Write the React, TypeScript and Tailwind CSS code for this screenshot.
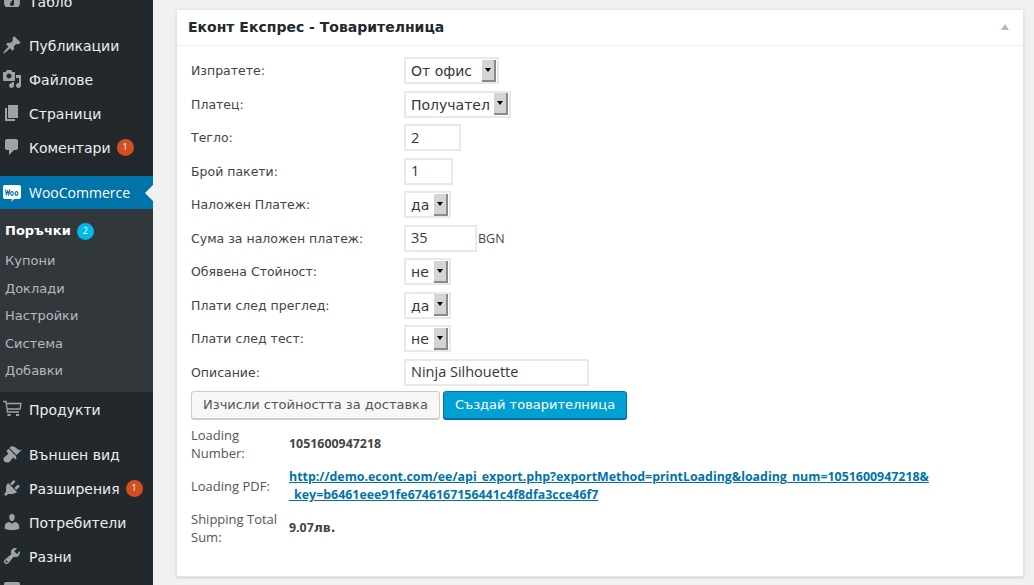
const cyr = "font-['DejaVu_Sans',sans-serif]";
const open = "font-['Open_Sans',sans-serif]";

const icons: Record<string, string> = {
  dashboard:
    "M3.76 16h12.48c1.1-1.37 1.76-3.11 1.76-5 0-4.42-3.58-8-8-8s-8 3.58-8 8c0 1.89.66 3.63 1.76 5zM10 4c.55 0 1 .45 1 1s-.45 1-1 1-1-.45-1-1 .45-1 1-1zM6 6c.55 0 1 .45 1 1s-.45 1-1 1-1-.45-1-1 .45-1 1-1zm8 0c.55 0 1 .45 1 1s-.45 1-1 1-1-.45-1-1 .45-1 1-1zm-5.37 5.55L12 7v6c0 1.1-.9 2-2 2s-2-.9-2-2c0-.57.24-1.08.63-1.45z",
  post: "M10.44 3.02l1.82-1.82 6.36 6.35-1.83 1.82c-1.05-.68-2.48-.57-3.41.36l-.75.75c-.92.93-1.04 2.35-.35 3.41l-1.83 1.82-2.41-2.41-2.8 2.79c-.42.42-3.38 2.71-3.8 2.29s1.86-3.39 2.28-3.81l2.79-2.79L4.1 9.36l1.83-1.82c1.05.69 2.48.57 3.4-.36l.75-.75c.93-.92 1.05-2.35.36-3.41z",
  media:
    "M13 11V4c0-.55-.45-1-1-1h-1.67L9 1H5L3.67 3H2c-.55 0-1 .45-1 1v7c0 .55.45 1 1 1h10c.55 0 1-.45 1-1zM7 4.5c1.38 0 2.5 1.12 2.5 2.5S8.38 9.5 7 9.5 4.5 8.38 4.5 7 5.62 4.5 7 4.5zM14 6h5v10.5c0 1.38-1.12 2.5-2.5 2.5S14 17.88 14 16.5s1.12-2.5 2.5-2.5c.17 0 .34.02.5.05V9h-3V6zm-4 8.05V13h2v3.5c0 1.38-1.12 2.5-2.5 2.5S7 17.88 7 16.5 8.12 14 9.5 14c.17 0 .34.02.5.05z",
  page: "M6 15V2h10v13H6zm-1 1h8v2H3V5h2v11z",
  comments: "M5 2h9c1.1 0 2 .9 2 2v7c0 1.1-.9 2-2 2h-2l-5 5v-5H5c-1.1 0-2-.9-2-2V4c0-1.1.9-2 2-2z",
  appearance:
    "M14.48 11.06L7.41 3.99l1.5-1.5c.5-.56 2.3-.47 3.51.32 1.21.8 1.43 1.28 2.91 2.1 1.18.64 2.45 1.26 4.45.85zm-.71.71L6.7 4.7 4.93 6.47c-.39.39-.39 1.02 0 1.41l1.06 1.06c.39.39.39 1.03 0 1.42-.6.6-1.43 1.11-2.21 1.69-.35.26-.7.53-1.01.84C1.43 13.23.91 15 2.3 17.7c2.7 1.39 4.47.87 5.81-.47.31-.31.58-.66.84-1.01.58-.78 1.09-1.61 1.69-2.21.39-.39 1.03-.39 1.42 0l1.06 1.06c.39.39 1.02.39 1.41 0z",
  plugins:
    "M13.11 4.36L9.87 7.6 8 5.73l3.24-3.24c.35-.34 1.05-.2 1.56.32.52.51.66 1.21.31 1.55zm-8 1.77l.91-1.12 9.01 9.01-1.19.84c-.71.71-2.63 1.16-3.82 1.16H6.14L4.9 17.26c-.59.59-1.54.59-2.12 0-.59-.58-.59-1.53 0-2.12l1.24-1.24v-3.88c0-1.13.4-3.19 1.09-3.89zm7.26 3.97l3.24-3.24c.34-.35 1.04-.21 1.55.31.52.51.66 1.21.31 1.55l-3.24 3.25z",
  users:
    "M10 9.25c-2.27 0-2.73-3.44-2.73-3.44C7 4.02 7.82 2 9.97 2c2.16 0 2.98 2.02 2.71 3.81 0 0-.41 3.44-2.68 3.44zm0 2.57L12.72 10c2.39 0 4.52 2.33 4.52 4.53v2.49s-3.65 1.13-7.24 1.13c-3.65 0-7.24-1.13-7.24-1.13v-2.49c0-2.25 1.94-4.48 4.47-4.48z",
  tools:
    "M16.68 9.77c-1.34 1.34-3.3 1.67-4.95.99l-5.41 6.52c-.99.99-2.59.99-3.58 0s-.99-2.59 0-3.57l6.52-5.42c-.68-1.65-.35-3.61.99-4.95 1.28-1.28 3.12-1.62 4.72-1.06l-2.89 2.89 2.82 2.82 2.86-2.87c.53 1.58.18 3.39-1.08 4.65zM3.81 16.21c.4.39 1.04.39 1.43 0 .4-.4.4-1.04 0-1.43-.39-.4-1.03-.4-1.43 0-.39.39-.39 1.03 0 1.43z",
  settings: "M18 16V4c0-1.1-.9-2-2-2H4c-1.1 0-2 .9-2 2v12c0 1.1.9 2 2 2h12c1.1 0 2-.9 2-2z",
};

function DashIcon({ name }: { name: string }) {
  return (
    <svg viewBox="0 0 20 20" className="h-5 w-5 shrink-0 fill-[#9ea3a8]">
      <path d={icons[name]} />
    </svg>
  );
}

function CartIcon() {
  return (
    <svg viewBox="0 0 20 20" className="h-5 w-5 shrink-0 fill-none stroke-[#9ea3a8]">
      <path d="M1 2.500h3l1.500 10.500h11.500M4.500 4.500h14.500l-1 5.500H5.500" strokeWidth="1.300" />
      <path d="M5.500 15h3v2h-3zM14 15h3v2h-3z" fill="#9ea3a8" stroke="none" />
    </svg>
  );
}

function WooIcon() {
  return (
    <svg viewBox="0 0 20 20" className="h-5 w-5 shrink-0">
      <path d="M3 2h14c1.300 0 2 .8 2 2v10c0 1.200-.7 2-2 2h-5l-2.500 3 .5-3H3c-1.300 0-2-.8-2-2V4c0-1.200.7-2 2-2z" fill="#fff" />
      <path d="M3.500 6.500l.8 5 1.400-3.500 1 3.500 1.200-5M10 8.500a1.300 2 0 1 0 .01 0M14.500 8.500a1.300 2 0 1 0 .01 0" fill="none" stroke="#0073aa" strokeWidth="1.100" />
    </svg>
  );
}

function MenuItem({ icon, label, badge }: { icon: React.ReactNode; label: string; badge?: string }) {
  return (
    <div className="flex h-[34px] items-center pl-[2px] text-[#eeeeee]">
      {icon}
      <span className={`ml-[7px] pt-[2px] text-[14px] ${cyr}`}>{label}</span>
      {badge && (
        <span className={`ml-[6px] flex h-[17px] w-[17px] items-center justify-center rounded-full bg-[#d54e21] text-[9px] text-white ${open}`}>
          {badge}
        </span>
      )}
    </div>
  );
}

function Sidebar() {
  return (
    <aside className="w-[153px] shrink-0 bg-[#23282d]">
      <div className="-mt-[16px]">
        <MenuItem icon={<DashIcon name="dashboard" />} label="Табло" />
      </div>
      <div className="mt-[10px]">
        <MenuItem icon={<DashIcon name="post" />} label="Публикации" />
        <MenuItem icon={<DashIcon name="media" />} label="Файлове" />
        <MenuItem icon={<DashIcon name="page" />} label="Страници" />
        <MenuItem icon={<DashIcon name="comments" />} label="Коментари" badge="1" />
      </div>
      <div className="relative mt-[12px] h-[33px] bg-[#0073aa] pl-[2px] text-white">
        <div className="flex h-full items-center">
          <WooIcon />
          <span className={`ml-[7px] text-[14px] ${open}`}>WooCommerce</span>
        </div>
        <span className="absolute right-0 top-[9px] h-0 w-0 border-y-[8px] border-r-[8px] border-y-transparent border-r-[#f1f1f1]" />
      </div>
      <div className={`h-[183px] bg-[#32373c] pt-[8px] text-[13px] text-[#b4b9be] ${cyr}`}>
        <div className="mb-[2px] flex h-[28px] items-center pl-[5px] font-bold text-white">
          Поръчки
          <span className={`ml-[6px] flex h-[17px] w-[17px] items-center justify-center rounded-full bg-[#00b9eb] text-[9px] font-normal text-white ${open}`}>
            2
          </span>
        </div>
        {["Купони", "Доклади", "Настройки", "Система", "Добавки"].map((s) => (
          <div key={s} className="flex h-[27.500px] items-center pl-[5px]">
            {s}
          </div>
        ))}
      </div>
      <MenuItem icon={<CartIcon />} label="Продукти" />
      <div className="mt-[11px]">
        <MenuItem icon={<DashIcon name="appearance" />} label="Външен вид" />
        <MenuItem icon={<DashIcon name="plugins" />} label="Разширения" badge="1" />
        <MenuItem icon={<DashIcon name="users" />} label="Потребители" />
        <MenuItem icon={<DashIcon name="tools" />} label="Разни" />
        <MenuItem icon={<DashIcon name="settings" />} label="Настройки" />
      </div>
    </aside>
  );
}

function Select({ value, width }: { value: string; width: string }) {
  return (
    <div className={`flex h-[27px] items-center justify-between border-2 border-[#e9e9e9] bg-white pl-[5px] pr-[1px] text-[14px] text-[#32373c] ${width} ${cyr}`}>
      <span className="pt-[2px]">{value}</span>
      <span className="flex h-[22px] w-[14px] items-center justify-center border-b-2 border-r-2 border-b-[#8a8a8a] border-r-[#8a8a8a] bg-[#d4d4d4]">
        <span className="h-0 w-0 border-x-[3px] border-t-[4px] border-x-transparent border-t-black" />
      </span>
    </div>
  );
}

function TextBox({ value, width }: { value: string; width: string }) {
  return (
    <div className={`flex h-[27px] items-center border-2 border-[#e9e9e9] bg-white pl-[5px] text-[14.500px] text-[#32373c] ${width} ${open}`}>
      {value}
    </div>
  );
}

function Row({ label, children }: { label: string; children: React.ReactNode }) {
  return (
    <div className="flex items-center">
      <div className={`w-[213px] shrink-0 pt-[2px] text-[12.500px] text-[#444444] ${cyr}`}>{label}</div>
      <div className="flex items-center">{children}</div>
    </div>
  );
}

function InfoRow({ label, children, className }: { label: React.ReactNode; children: React.ReactNode; className?: string }) {
  return (
    <div className={`flex items-center ${className ?? ""}`}>
      <div className={`w-[98px] shrink-0 text-[13px] leading-[18px] text-[#555555] ${open}`}>{label}</div>
      <div className={`text-[12.400px] font-bold leading-[18px] text-[#444444] ${open}`}>{children}</div>
    </div>
  );
}

export default function App() {
  return (
    <div className="flex h-[585px] w-[1034px] overflow-hidden bg-[#f1f1f1]">
      <Sidebar />
      <main className="flex-1 pl-[23px] pr-[10px] pt-[9px]">
        <section className="h-[568px] border border-[#e5e5e5] bg-white shadow-sm">
          <div className="relative flex h-[36px] items-center border-b border-[#eeeeee] pl-[11px]">
            <h2 className={`text-[14px] font-bold text-[#23282d] ${cyr}`}>Еконт Експрес - Товарителница</h2>
            <span className="absolute right-[14px] top-[14px] h-0 w-0 border-x-[4px] border-b-[6px] border-x-transparent border-b-[#b4b9be]" />
          </div>
          <div className="flex flex-col gap-[6.500px] pl-[14px] pt-[11px]">
            <Row label="Изпратете:"><Select value="От офис" width="w-[95px]" /></Row>
            <Row label="Платец:"><Select value="Получател" width="w-[107px]" /></Row>
            <Row label="Тегло:"><TextBox value="2" width="w-[57px]" /></Row>
            <Row label="Брой пакети:"><TextBox value="1" width="w-[49px]" /></Row>
            <Row label="Наложен Платеж:"><Select value="да" width="w-[47px]" /></Row>
            <Row label="Сума за наложен платеж:">
              <TextBox value="35" width="w-[73px]" />
              <span className={`ml-[1px] pt-[2px] text-[12.500px] text-[#444444] ${open}`}>BGN</span>
            </Row>
            <Row label="Обявена Стойност:"><Select value="не" width="w-[47px]" /></Row>
            <Row label="Плати след преглед:"><Select value="да" width="w-[47px]" /></Row>
            <Row label="Плати след тест:"><Select value="не" width="w-[47px]" /></Row>
            <Row label="Описание:"><TextBox value="Ninja Silhouette" width="w-[185px]" /></Row>
          </div>
          <div className={`ml-[14px] mt-[5.500px] flex gap-[3px] text-[13px] ${cyr}`}>
            <button className="h-[28px] w-[249px] rounded-[3px] border border-[#cccccc] bg-[#f7f7f7] text-[#555555] shadow-[0_1px_0_#cccccc]">
              Изчисли стойността за доставка
            </button>
            <button className="h-[28px] w-[184px] rounded-[3px] border border-[#0073aa] bg-[#00a0d2] text-white shadow-[0_1px_0_#006799]">
              Създай товарителница
            </button>
          </div>
          <div className="ml-[14px] mt-[7px] flex flex-col">
            <InfoRow label={<>Loading<br />Number:</>}>1051600947218</InfoRow>
            <InfoRow className="mt-[6px]" label="Loading PDF:">
              <a className="text-[#0073aa] underline">
                http://demo.econt.com/ee/api_export.php?exportMethod=printLoading&amp;loading_num=1051600947218&amp;
                <br />
                _key=b6461eee91fe6746167156441c4f8dfa3cce46f7
              </a>
            </InfoRow>
            <InfoRow className="mt-[6px]" label={<>Shipping Total<br />Sum:</>}>
              9.07<span className={cyr}>лв.</span>
            </InfoRow>
          </div>
        </section>
      </main>
    </div>
  );
}
